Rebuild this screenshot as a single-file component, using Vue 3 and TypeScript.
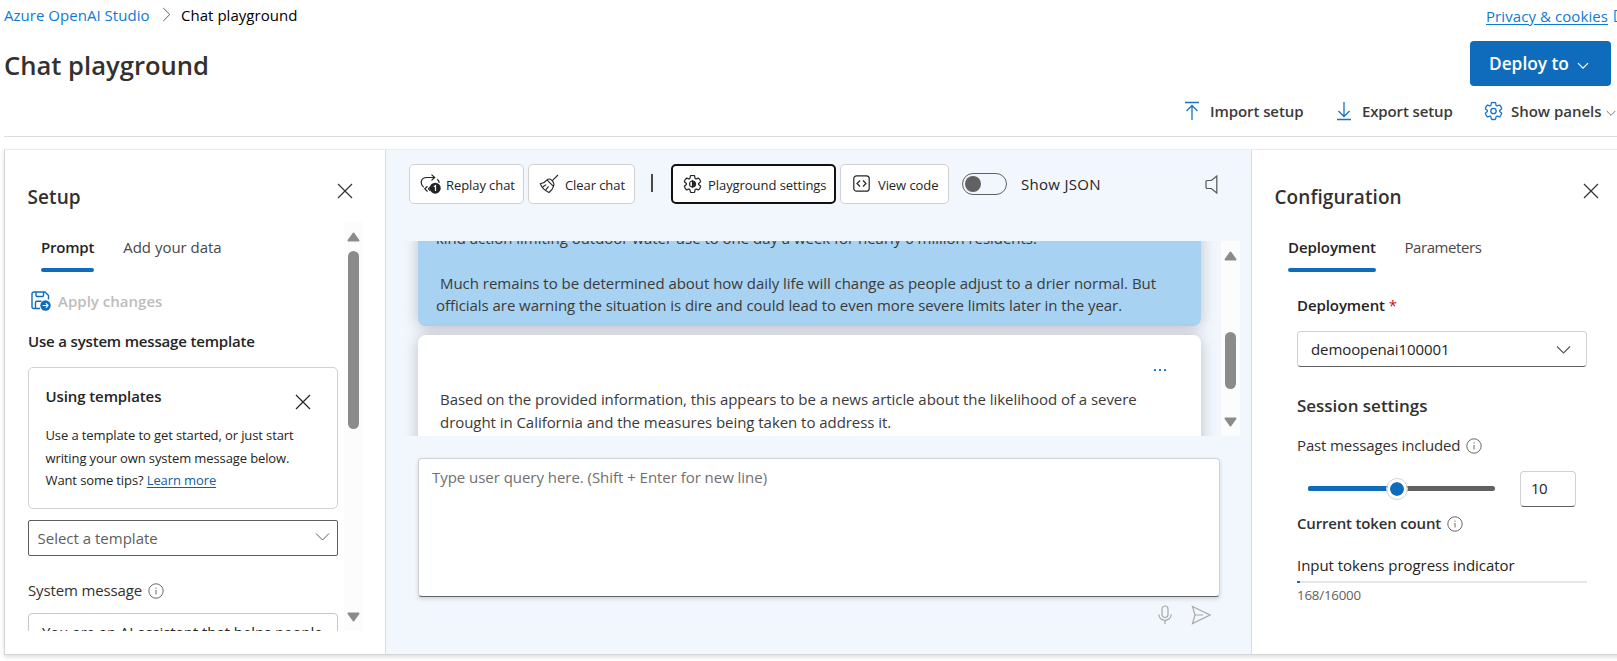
<script setup lang="ts">
import { ref } from 'vue'

const gear =
  'M1.91 7.38A8.5 8.5 0 0 1 3.7 4.3a.5.5 0 0 1 .54-.13l1.92.68a1 1 0 0 0 1.32-.76l.36-2a.5.5 0 0 1 .4-.4 8.53 8.53 0 0 1 3.55 0c.2.04.35.2.38.4l.37 2a1 1 0 0 0 1.32.76l1.92-.68a.5.5 0 0 1 .54.13 8.5 8.5 0 0 1 1.78 3.08c.06.2 0 .4-.15.54l-1.56 1.32a1 1 0 0 0 0 1.52l1.56 1.32a.5.5 0 0 1 .15.54 8.5 8.5 0 0 1-1.78 3.08.5.5 0 0 1-.54.13l-1.92-.68a1 1 0 0 0-1.32.76l-.37 2a.5.5 0 0 1-.38.4 8.53 8.53 0 0 1-3.56 0 .5.5 0 0 1-.39-.4l-.36-2a1 1 0 0 0-1.32-.76l-1.92.68a.5.5 0 0 1-.54-.13 8.5 8.5 0 0 1-1.78-3.08.5.5 0 0 1 .15-.54l1.56-1.32a1 1 0 0 0 0-1.52L2.06 7.92a.5.5 0 0 1-.15-.54Z'

const pastMessages = ref(10)
const usedTokens = 168
const maxTokens = 16000
const sliderPercent = 47.3
</script>

<template>
  <div class="page">
    <header class="header">
      <div class="topline">
        <a class="crumb-link">Azure OpenAI Studio</a>
        <svg class="crumb-sep" width="10" height="15" viewBox="0 0 10 15"><path d="M1.2 1l6.6 6.5L1.2 14" /></svg>
        <span class="crumb-current">Chat playground</span>
        <a class="privacy">Privacy &amp; cookies</a>
        <svg class="external" width="14" height="14" viewBox="0 0 14 14"><path d="M5 1.500H1v11h11V9M7.500 1.500H13V7M13 1.500L6 8" /></svg>
      </div>
      <div class="titleline">
        <h1>Chat playground</h1>
        <button class="deploy">
          <span>Deploy to</span>
          <svg width="12" height="8" viewBox="0 0 12 8"><path d="M1 1.200l5 5 5-5" /></svg>
        </button>
      </div>
      <div class="commands">
        <div class="command import">
          <svg width="14" height="20" viewBox="0 0 14 20"><path d="M0 1.500h14M7 19V4.500M1.500 10L7 4.500l5.500 5.500" /></svg>
          <span>Import setup</span>
        </div>
        <div class="command export">
          <svg width="14" height="20" viewBox="0 0 14 20"><path d="M0 18.500h14M7 1v14.500M1.500 10L7 15.500l5.500-5.500" /></svg>
          <span>Export setup</span>
        </div>
        <div class="command panels">
          <svg width="19" height="20" viewBox="0.500 0 19 20"><path :d="gear" /><circle cx="10" cy="10" r="2.700" /></svg>
          <span>Show panels</span>
          <svg class="tiny" width="10" height="7" viewBox="0 0 10 7"><path d="M.7 1L5 5.300 9.300 1" /></svg>
        </div>
      </div>
    </header>

    <main class="workspace">
      <aside class="setup">
        <div class="panel-head">
          <h2>Setup</h2>
          <svg class="close" width="16" height="16" viewBox="0 0 16 16"><path d="M1 1l14 14M15 1L1 15" /></svg>
        </div>
        <div class="setup-scroll">
          <div class="setup-content">
            <nav class="tabs">
              <span class="tab active prompt">Prompt</span>
              <span class="tab">Add your data</span>
            </nav>
            <div class="apply">
              <svg width="20" height="20" viewBox="0 0 20 20">
                <path d="M9 17.500H2.800A1.800 1.800 0 0 1 1 15.700V2.800A1.800 1.800 0 0 1 2.800 1H14l3.500 3.500v4M5 1v3.500a1 1 0 0 0 1 1h5.500a1 1 0 0 0 1-1V1M4.500 17.500v-6a1.200 1.200 0 0 1 1.200-1.200H10.500" />
                <circle class="dot" cx="14.500" cy="14.500" r="5.200" />
                <path class="arrow" d="M11.700 14.500h5.400M14.800 12.200l2.300 2.300-2.300 2.300" />
              </svg>
              <span>Apply changes</span>
            </div>
            <h3>Use a system message template</h3>
            <section class="tips">
              <div class="tips-head">
                <h4>Using templates</h4>
                <svg class="close" width="16" height="16" viewBox="0 0 16 16"><path d="M1 1l14 14M15 1L1 15" /></svg>
              </div>
              <p>Use a template to get started, or just start<br />writing your own system message below.<br />Want some tips? <a>Learn more</a></p>
            </section>
            <div class="template-select">
              <span>Select a template</span>
              <svg width="15" height="10" viewBox="0 0 15 10"><path d="M1 1.500l6.500 6.500L14 1.500" /></svg>
            </div>
            <div class="system-label">
              <span>System message</span>
              <svg class="info" width="16" height="16" viewBox="0 0 16 16"><circle cx="8" cy="8" r="7.200" /><path d="M8 7v4.500M8 4.500v1.200" /></svg>
            </div>
            <div class="system-text">You are an AI assistant that helps people</div>
          </div>
          <div class="scrollbar">
            <svg width="13" height="10" viewBox="0 0 13 10"><path d="M6.500 1.500L11.500 8.500H1.500z" /></svg>
            <div class="thumb"></div>
            <svg width="13" height="10" viewBox="0 0 13 10"><path d="M6.500 8.500L11.500 1.500H1.500z" /></svg>
          </div>
        </div>
      </aside>

      <section class="chat">
        <div class="toolbar">
          <button class="tool replay">
            <svg width="21" height="20" viewBox="0 0 21 20">
              <path d="M3.600 13.200C-.6 9.500 1 3.500 6.500 3.500h8M11.500 .6l3.200 2.900-3.200 2.900M17.300 5.200c1.200 1 1.800 2.300 2 3.600M7.500 12.200L4.800 14.800l2.700 2.700M10.300 12.800l-1.800 2 1.800 2" />
              <circle class="badge" cx="15.200" cy="14.200" r="5.500" />
              <path class="one" d="M13.800 12.700l1.700-1.100v5.400" />
            </svg>
            <span>Replay chat</span>
          </button>
          <button class="tool clear">
            <svg width="20" height="20" viewBox="0 0 20 20"><path d="M19 1l-6.200 6.200M8 5.800l6.500 6.500M8 5.800C6 8.500 4 9.300 1.300 9.800c1.700 4.200 4.500 7 8.700 8.700 2.200-1.700 3.800-3.700 4.500-6.200M8 5.800c1.600-1.200 3.300-1 4.600.3 1.400 1.400 3.200 3.600 1.900 6.200M4 12.800l3.200-2.200M6.800 15.800l2.700-3.500" /></svg>
            <span>Clear chat</span>
          </button>
          <i class="divider"></i>
          <button class="tool settings">
            <svg width="19" height="20" viewBox="0.500 0 19 20"><path :d="gear" /><circle cx="10" cy="10" r="3" /><path class="fill" d="M10 7l3 3-3 3z" /></svg>
            <span>Playground settings</span>
          </button>
          <button class="tool code">
            <svg width="17" height="17" viewBox="0 0 17 17"><rect x=".8" y=".8" width="15.400" height="15.400" rx="2.800" /><path d="M7 5.500l-3 3 3 3M10 5.500l3 3-3 3" /></svg>
            <span>View code</span>
          </button>
          <div class="toggle"><i></i></div>
          <span class="json">Show JSON</span>
          <svg class="speaker" width="13" height="19" viewBox="0 0 13 19"><path d="M11.800 1v17L6.300 13.500H2.200A1.200 1.200 0 0 1 1 12.300V6.700a1.200 1.200 0 0 1 1.200-1.200h4.100z" /></svg>
        </div>

        <div class="conversation">
          <div class="messages">
            <div class="message user">
              <p class="l1">kind action limiting outdoor water use to one day a week for nearly 6 million residents.</p>
              <p class="l2">Much remains to be determined about how daily life will change as people adjust to a drier normal. But</p>
              <p class="l3">officials are warning the situation is dire and could lead to even more severe limits later in the year.</p>
            </div>
            <div class="message assistant">
              <div class="more"><i></i><i></i><i></i></div>
              <p>Based on the provided information, this appears to be a news article about the likelihood of a severe<br />drought in California and the measures being taken to address it.</p>
            </div>
          </div>
          <div class="scrollbar">
            <svg width="13" height="10" viewBox="0 0 13 10"><path d="M6.500 1.500L11.500 8.500H1.500z" /></svg>
            <div class="thumb"></div>
            <svg width="13" height="10" viewBox="0 0 13 10"><path d="M6.500 8.500L11.500 1.500H1.500z" /></svg>
          </div>
        </div>

        <div class="query">Type user query here. (Shift + Enter for new line)</div>
        <div class="query-actions">
          <svg width="14" height="20" viewBox="0 0 14 20"><rect x="4" y="1" width="6" height="11.500" rx="3" /><path d="M1 9.500v.8a6 5 0 0 0 12 0v-.8M7 15.300V19" /></svg>
          <svg width="20" height="20" viewBox="0 0 20 20"><path d="M1.500 1.500L19 10 1.500 18.500 4 10zM4 10h8" /></svg>
        </div>
      </section>

      <aside class="config">
        <div class="panel-head">
          <h2>Configuration</h2>
          <svg class="close" width="16" height="16" viewBox="0 0 16 16"><path d="M1 1l14 14M15 1L1 15" /></svg>
        </div>
        <nav class="tabs">
          <span class="tab active">Deployment</span>
          <span class="tab params">Parameters</span>
        </nav>
        <div class="config-body">
          <div class="deployment-label">Deployment <em>*</em></div>
          <div class="deployment-select">
            <span>demoopenai100001</span>
            <svg width="15" height="10" viewBox="0 0 15 10"><path d="M1 1.500l6.500 6.500L14 1.500" /></svg>
          </div>
          <h3 class="session">Session settings</h3>
          <div class="past">
            <span>Past messages included</span>
            <svg class="info" width="16" height="16" viewBox="0 0 16 16"><circle cx="8" cy="8" r="7.200" /><path d="M8 7v4.500M8 4.500v1.200" /></svg>
          </div>
          <div class="slider-row">
            <div class="rail">
              <div class="rail-fill" :style="{ width: sliderPercent + '%' }"><i class="knob"></i></div>
            </div>
            <div class="number">{{ pastMessages }}</div>
          </div>
          <div class="tokens">
            <span>Current token count</span>
            <svg class="info" width="16" height="16" viewBox="0 0 16 16"><circle cx="8" cy="8" r="7.200" /><path d="M8 7v4.500M8 4.500v1.200" /></svg>
          </div>
          <div class="indicator">Input tokens progress indicator</div>
          <div class="progress"><i :style="{ width: (usedTokens / maxTokens) * 100 + '%' }"></i></div>
          <div class="count">{{ usedTokens }}/{{ maxTokens }}</div>
        </div>
      </aside>
    </main>
  </div>
</template>

<style>
body { margin: 0; background: #fff; }
</style>

<style scoped>
.page { width: 1617px; height: 661px; overflow: hidden; font: 15px/20px "Open Sans", "Noto Sans", sans-serif; color: #323130; white-space: nowrap; }
h1, h2, h3, h4, p { margin: 0; font-weight: 600; }
p { font-weight: 400; }
button { font: inherit; color: inherit; padding: 0; box-sizing: border-box; }
svg { display: block; flex: none; fill: none; stroke: currentColor; stroke-width: 1.2; }

.header { height: 136px; margin-left: 4px; border-bottom: 1px solid #dcdcdc; }
.topline { display: flex; align-items: center; height: 29px; padding-bottom: 2px; width: 1625px; }
.crumb-link { color: #0f7ad4; width: 158px; letter-spacing: .03px; }
.crumb-sep { color: #605e5c; stroke-width: 1; margin-right: 9px; }
.crumb-current { color: #000; letter-spacing: .03px; }
.privacy { color: #0f7ad4; margin-left: auto; letter-spacing: .08px; text-decoration: underline; text-underline-offset: 2px; padding-top: 2px; }
.external { color: #0f7ad4; margin: 2px 1px 0 6px; }
.titleline { display: flex; justify-content: space-between; height: 68px; }
h1 { font-size: 25.6px; line-height: 69px; }
.deploy { display: flex; align-items: center; width: 141px; height: 45px; margin: 10px 6px 0 0; padding: 0 0 0 19px; border: 0; border-radius: 4px; background: #0f6cbd; color: #fff; font-size: 17.3px; font-weight: 600; }
.deploy svg { margin: 4px 0 0 8px; }
.commands { display: flex; height: 24px; margin-left: 1181px; font-weight: 600; color: #3b3a39; }
.command { display: flex; align-items: center; height: 24px; }
.command svg { color: #1a73c2; stroke-width: 1.3; margin-right: 11px; }
.import { width: 152px; letter-spacing: -.08px; }
.export { width: 148px; letter-spacing: -.13px; }
.panels { letter-spacing: -.03px; }
.panels svg { margin: 0 8px 0 -1px; }
.panels .tiny { color: #777; stroke-width: 1; margin: 4px 0 0 5px; }

.workspace { display: flex; box-sizing: border-box; width: 1640px; height: 506px; margin: 12px 0 0 4px; border: 1px solid #d6d6d6; border-top-color: #ededed; box-shadow: 0 2px 4px rgba(0, 0, 0, .14); }
.setup { width: 380px; border-right: 1px solid #dadcdf; }
.panel-head { display: flex; height: 72px; padding-left: 22.500px; }
.panel-head h2 { font-size: 19px; line-height: 94px; height: 72px; letter-spacing: .08px; }
.close { stroke-width: 1.2; }
.setup .panel-head .close { margin: 32.500px 32.500px 0 auto; }
.setup-scroll { display: flex; height: 409px; overflow: hidden; }
.setup-content { width: 310px; margin: 0 6px 0 23px; }
.tabs { display: flex; gap: 29px; height: 50px; padding-left: 13px; color: #4a4846; }
.tab { line-height: 51px; height: 50px; letter-spacing: -.02px; position: relative; }
.tab.active { font-weight: 600; color: #242424; letter-spacing: -.08px; }
.tab.active::after { content: ""; position: absolute; left: 0; right: 0; bottom: 0; height: 4px; border-radius: 2px; background: #0f6cbd; }
.tab.active.prompt { letter-spacing: -.2px; }
.tab.params { letter-spacing: -.42px; margin-left: -.5px; }
.apply { box-sizing: border-box; display: flex; align-items: center; height: 59px; padding: 0 0 2px 3px; color: #bdbdbd; font-weight: 600; letter-spacing: .02px; }
.apply svg { color: #0f6cbd; margin: 1px 7px 0 0; stroke-width: 1.4; }
.apply .dot { fill: #0f6cbd; stroke: none; }
.apply .arrow { stroke: #fff; stroke-width: 1.1; }
.setup h3 { font-size: 15px; letter-spacing: -.175px; color: #242424; }
.tips { box-sizing: border-box; height: 142px; margin-top: 16px; padding: 16px 16.500px; border: 1px solid #d1d1d1; border-radius: 5px; color: #242424; }
.tips-head { display: flex; justify-content: space-between; height: 40px; }
.tips h4 { font-size: 15px; line-height: 24px; letter-spacing: -.1px; }
.tips .close { margin: 10px 10px 0 0; }
.tips p { font-size: 13px; line-height: 22.5px; letter-spacing: -.11px; }
.tips a { color: #115ea3; text-decoration: underline; text-underline-offset: 2px; }
.template-select { box-sizing: border-box; display: flex; align-items: center; justify-content: space-between; height: 36px; margin-top: 11px; padding: 0 7px 0 8.500px; border: 1px solid #605e5c; border-radius: 2px; color: #605e5c; }
.template-select svg { margin-top: -3px; stroke-width: 1; }
.system-label { display: flex; align-items: center; height: 20px; margin-top: 24px; letter-spacing: -.14px; }
.info { color: #6b6967; stroke-width: 1; margin: 2px 0 0 5.500px; }
.system-text { box-sizing: border-box; height: 60px; margin-top: 13px; padding: 8px 13px; border: 1px solid #c8c8c8; border-radius: 4px; letter-spacing: -.08px; color: #242424; }
.scrollbar { box-sizing: border-box; display: flex; flex-direction: column; align-items: center; width: 19px; background: #fcfcfc; padding: 10px 0 8px; flex: none; }
.scrollbar svg { fill: #8b8b8b; stroke: #8b8b8b; stroke-width: 2; stroke-linejoin: round; }
.thumb { width: 11px; border-radius: 6px; background: #8b8b8b; }
.setup .thumb { height: 178px; margin: 9px 0 183px; }

.chat { width: 865px; background: #f2f6fd; }
.toolbar { display: flex; align-items: center; height: 40px; padding: 14px 0 0 23px; }
.tool { display: flex; align-items: center; height: 40px; border: 1px solid #d1d1d1; border-radius: 5px; background: #fff; color: #242424; font-size: 13px; letter-spacing: -.08px; }
.tool span { padding-top: 2px; }
.replay { width: 115px; padding-left: 10px; margin-right: 4px; }
.replay svg { margin: -1px 5px 0 0; }
.badge { fill: #242424; stroke: none; }
.one { stroke: #fff; }
.clear { width: 107px; padding-left: 10px; }
.clear svg { margin-right: 6px; stroke-width: 1.1; }
.divider { width: 2px; height: 18px; margin: -2px 18px 0 16px; background: #4a4947; }
.settings { width: 165px; padding-left: 10px; margin-right: 4px; border: 2px solid #111; letter-spacing: -.06px; }
.settings svg { margin: -1px 6px 0 0; }
.settings .fill { fill: #242424; }
.code { width: 109px; padding-left: 12px; }
.code svg { margin: -1px 8px 0 0; }
.toggle { box-sizing: border-box; width: 45px; height: 22px; margin: 0 14px 0 13px; padding: 2px; border: 1px solid #616161; border-radius: 11px; }
.toggle i { display: block; width: 16px; height: 16px; border-radius: 50%; background: #616161; }
.json { letter-spacing: .3px; color: #242424; }
.speaker { margin-left: 104px; color: #555; }

.conversation { display: flex; height: 195px; margin: 37px 0 0 16px; width: 838px; overflow: hidden; }
.messages { width: 819px; overflow: hidden; color: #3b3a39; }
.message { box-sizing: border-box; width: 783px; margin-left: 16px; border-radius: 8px; box-shadow: 0 2px 16px rgba(0, 0, 0, .22); }
.user { height: 99px; margin-top: -14px; padding-left: 18px; background: #a7d2f2; line-height: 22px; }
.l1 { letter-spacing: -.03px; margin-bottom: 23px; }
.l2 { letter-spacing: -.034px; padding-left: 4px; }
.l3 { letter-spacing: -.052px; }
.assistant { position: relative; height: 130px; margin-top: 9px; padding: 34px 22px 0; background: #fff; line-height: 23px; letter-spacing: -.048px; }
.more { display: flex; gap: 3px; margin: 0 13px 17px auto; width: 12px; }
.more i { width: 2px; height: 2px; background: #1f7fd1; }
.conversation .thumb { height: 57px; margin: 71px 0 28px; }
.query { box-sizing: border-box; width: 802px; height: 139px; margin: 22px 0 0 32px; padding: 8px 13px; border: 1px solid #d1d1d1; border-bottom-color: #616161; border-radius: 4px; background: #fff; color: #707070; letter-spacing: -.04px; box-shadow: 0 2px 4px rgba(0, 0, 0, .14); }
.query-actions { display: flex; justify-content: flex-end; gap: 19px; margin: 8px 40px 0 0; color: #a8a8a8; }

.config { flex: 1; border-left: 1px solid #dadcdf; }
.config .panel-head h2 { width: 149px; }
.config .panel-head .close { margin: 32.500px 0 0 159.500px; }
.config .tabs { padding-left: 36px; }
.config-body { width: 290px; margin: 23px 0 0 45px; }
.deployment-label { font-weight: 600; letter-spacing: -.08px; color: #242424; }
.deployment-label em { font-style: normal; font-weight: 400; color: #c50f1f; }
.deployment-select { box-sizing: border-box; display: flex; align-items: center; justify-content: space-between; height: 36px; margin-top: 16px; padding: 0 15px 0 13px; border: 1px solid #d1d1d1; border-bottom-color: #616161; border-radius: 4px; letter-spacing: -.09px; color: #242424; }
.deployment-select svg { margin-top: 2px; stroke-width: 1.1; color: #555; }
.session { margin-top: 29px; font-size: 17px; letter-spacing: -.02px; }
.past { display: flex; align-items: center; height: 20px; margin-top: 19px; letter-spacing: -.13px; }
.slider-row { display: flex; align-items: center; height: 36px; margin-top: 16px; padding-left: 11px; }
.rail { width: 187px; height: 5px; border-radius: 3px; background: #616161; margin: -1px 25px 0 0; }
.rail-fill { position: relative; height: 5px; border-radius: 3px; background: #0f6cbd; }
.knob { position: absolute; right: -11px; top: -7.500px; width: 14px; height: 14px; border: 3px solid #fff; border-radius: 50%; background: #0f6cbd; background-clip: padding-box; outline: 1px solid #d1d5da; }
.number { box-sizing: border-box; width: 56px; height: 36px; padding: 6px 10px; border: 1px solid #d1d1d1; border-bottom-color: #616161; border-radius: 4px; letter-spacing: -.5px; color: #242424; }
.tokens { display: flex; align-items: center; height: 20px; margin-top: 6px; font-weight: 600; letter-spacing: -.175px; }
.indicator { margin-top: 22px; letter-spacing: -.05px; color: #242424; }
.progress { height: 2px; margin-top: 6px; background: #e6e6e6; }
.progress i { display: block; height: 2px; background: #0f6cbd; }
.count { margin-top: 2px; font-size: 13.3px; letter-spacing: -.2px; color: #616161; }
</style>
